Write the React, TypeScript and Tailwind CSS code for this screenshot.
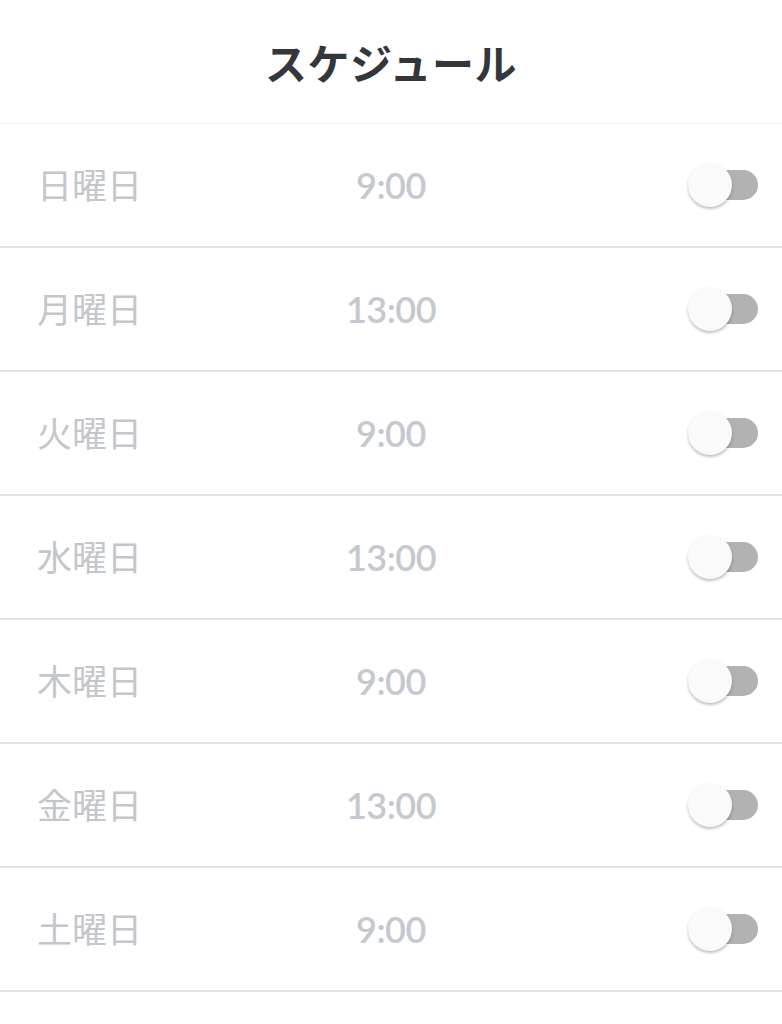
const days = [
  { day: '日曜日', time: '9:00' },
  { day: '月曜日', time: '13:00' },
  { day: '火曜日', time: '9:00' },
  { day: '水曜日', time: '13:00' },
  { day: '木曜日', time: '9:00' },
  { day: '金曜日', time: '13:00' },
  { day: '土曜日', time: '9:00' },
];

function Toggle() {
  return (
    <div className="relative w-[70px] h-[44px]">
      <div className="absolute right-0 top-[7px] w-[58px] h-[30px] rounded-full bg-[#b2b2b2]" />
      <div className="absolute left-0 top-0 w-[44px] h-[44px] rounded-full bg-[#fafafa] shadow-[0_2px_3px_rgba(0,0,0,0.25)]" />
    </div>
  );
}

export default function App() {
  return (
    <div className="w-full min-h-screen bg-white font-['Noto_Sans_CJK_JP',sans-serif]">
      <header className="h-[124px] flex items-center justify-center border-b border-[#f1f1f1]">
        <h1 className="text-[42px] font-semibold text-[#33373c] tracking-[0.5px]">スケジュール</h1>
      </header>
      {days.map((d) => (
        <div
          key={d.day}
          className="h-[124px] grid grid-cols-[1fr_auto_1fr] items-center border-b-2 border-[#e3e3e3]"
        >
          <span className="pl-[37px] text-[35px] text-[#c3c6ca] leading-none -mt-[3px]">{d.day}</span>
          <span className="font-['Lato',sans-serif] text-[36px] font-semibold text-[#c5c9cf] leading-none tracking-[-0.5px]">
            {d.time}
          </span>
          <div className="flex justify-end pr-[24px]">
            <Toggle />
          </div>
        </div>
      ))}
    </div>
  );
}
